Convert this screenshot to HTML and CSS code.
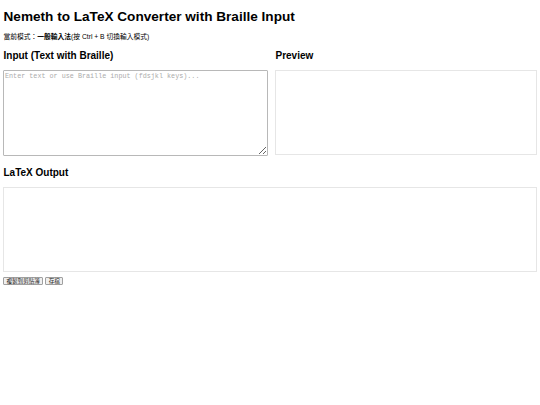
FILE: index.html
```html
<!DOCTYPE html>
<html lang="zh-Hant">
<head>
<meta charset="utf-8">
<title>Nemeth to LaTeX Converter</title>
<link rel="stylesheet" href="styles.css">
</head>
<body>
<h1 class="title">Nemeth to LaTeX Converter with Braille Input</h1>
<p class="mode">當前模式：<strong>一般輸入法</strong>(按 Ctrl + B 切換輸入模式)</p>
<div class="panes">
  <section class="pane">
    <h2 class="heading">Input (Text with Braille)</h2>
    <textarea class="input" placeholder="Enter text or use Braille input (fdsjkl keys)..."></textarea>
  </section>
  <section class="pane">
    <h2 class="heading">Preview</h2>
    <div class="preview"></div>
  </section>
</div>
<section class="output">
  <h2 class="heading heading-out">LaTeX Output</h2>
  <div class="out-box"></div>
</section>
<div class="actions">
  <button class="btn">複製到剪貼簿</button>
  <button class="btn">存檔</button>
</div>
</body>
</html>
```
FILE: styles.css
```css
html, body {
  background: #fff;
}
body {
  margin: 3px;
  font-family: "Liberation Sans", Arial, "Noto Sans CJK TC", sans-serif;
  color: #000;
}
.title {
  font-size: 13.6px;
  line-height: 16px;
  font-weight: bold;
  margin: 6.2px 0 0 0.5px;
}
.mode {
  font-size: 6.75px;
  line-height: 8px;
  margin: 8px 0 0 0.5px;
}
.mode strong {
  font-weight: bold;
}
.panes {
  display: grid;
  grid-template-columns: 265px 1fr;
  column-gap: 7px;
  margin-top: 9.3px;
}
.pane {
  display: flex;
  flex-direction: column;
}
.heading {
  font-size: 10px;
  line-height: 12px;
  font-weight: bold;
  margin: 0 0 7.5px 0.5px;
}
.input {
  box-sizing: border-box;
  width: 265px;
  height: 86px;
  margin: 0;
  padding: 1px;
  border: 1px solid #b8b8b8;
  border-radius: 1px;
  font-family: "Liberation Mono", "Courier New", monospace;
  font-size: 6.75px;
  line-height: 8px;
  resize: both;
  display: block;
}
.input::placeholder {
  color: #ababab;
}
.preview {
  box-sizing: border-box;
  height: 85px;
  border: 1px solid #e6e6e6;
}
.output {
  margin-top: 11.5px;
}
.out-box {
  box-sizing: border-box;
  height: 85px;
  border: 1px solid #e6e6e6;
}
.actions {
  display: flex;
  gap: 2px;
  margin-top: 5px;
}
.btn {
  box-sizing: border-box;
  height: 8px;
  margin: 0;
  padding: 0 2.5px;
  font-family: "Noto Sans CJK TC", sans-serif;
  font-size: 5.55px;
  line-height: 6px;
  background: #efefef;
  border: 0.5px solid #a0a0a0;
  border-radius: 1px;
  color: #222;
  display: flex;
  align-items: center;
}
```
